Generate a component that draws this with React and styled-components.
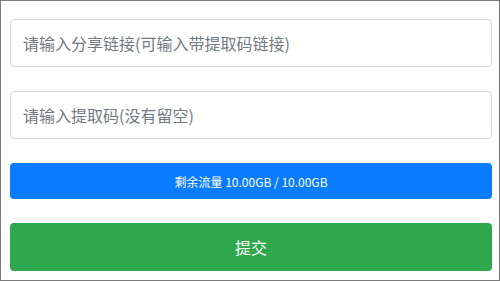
import styled, { createGlobalStyle } from "styled-components";

const GlobalStyle = createGlobalStyle`
  html, body {
    margin: 0;
    padding: 0;
    background: #ffffff;
  }
  * {
    box-sizing: border-box;
  }
`;

export const Frame = styled.div`
  width: 500px;
  height: 281px;
  border: 1px solid #7b7b7b;
  background: #ffffff;
  padding: 18px 7px 0 9px;
  display: flex;
  flex-direction: column;
  gap: 24px;
  font-family: "Noto Sans CJK SC", "Noto Sans", "Liberation Sans", sans-serif;
`;

export const Field = styled.input`
  display: block;
  width: 100%;
  height: 48px;
  margin: 0;
  padding: 0 12px;
  border: 1px solid #d3d6d9;
  border-radius: 4px;
  background: #ffffff;
  font-family: inherit;
  font-size: 16px;
  color: #495057;
  outline: none;
  &::placeholder {
    color: #737a80;
  }
`;

export const Quota = styled.div`
  height: 36px;
  border-radius: 4px;
  background: #0a7cff;
  color: #ffffff;
  font-size: 12px;
  display: flex;
  align-items: center;
  justify-content: center;
`;

export const Submit = styled.button`
  height: 48px;
  width: 100%;
  border: none;
  border-radius: 4px;
  background: #2fa84d;
  color: #ffffff;
  font-family: inherit;
  font-size: 16px;
  cursor: pointer;
  padding: 0;
`;

const App = () => {
  return (
    <>
      <GlobalStyle />
      <Frame>
        <Field placeholder="请输入分享链接(可输入带提取码链接)" />
        <Field placeholder="请输入提取码(没有留空)" />
        <Quota>剩余流量 10.00GB / 10.00GB</Quota>
        <Submit>提交</Submit>
      </Frame>
    </>
  );
};

export default App;
